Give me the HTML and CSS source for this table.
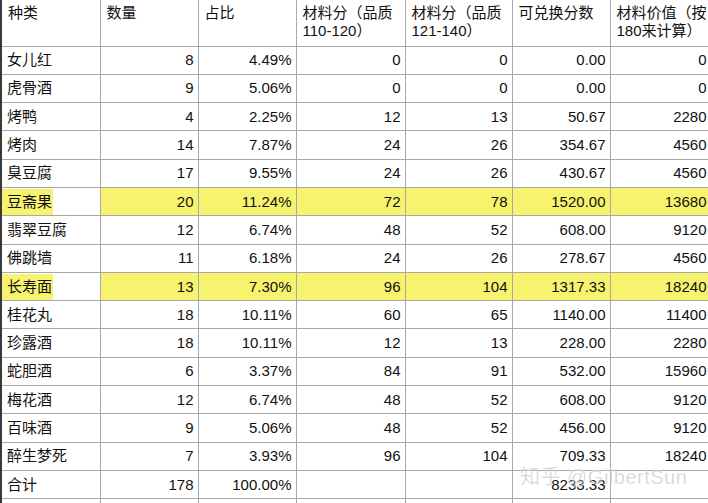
FILE: index.html
```html
<!DOCTYPE html>
<html lang="zh">
<head>
<meta charset="utf-8">
<link rel="stylesheet" href="styles.css">
</head>
<body>
<div class="sheet">
<table class="grid">
<colgroup>
<col class="c1"><col class="c2"><col class="c3"><col class="c4"><col class="c5"><col class="c6"><col class="c7">
</colgroup>
<thead>
<tr class="head">
<th>种类</th><th>数量</th><th>占比</th><th>材料分（品质<br>110-120）</th><th>材料分（品质<br>121-140）</th><th>可兑换分数</th><th>材料价值（按<br>180来计算）</th>
</tr>
</thead>
<tbody>
<tr><td>女儿红</td><td>8</td><td>4.49%</td><td>0</td><td>0</td><td>0.00</td><td>0</td></tr>
<tr><td>虎骨酒</td><td>9</td><td>5.06%</td><td>0</td><td>0</td><td>0.00</td><td>0</td></tr>
<tr><td>烤鸭</td><td>4</td><td>2.25%</td><td>12</td><td>13</td><td>50.67</td><td>2280</td></tr>
<tr><td>烤肉</td><td>14</td><td>7.87%</td><td>24</td><td>26</td><td>354.67</td><td>4560</td></tr>
<tr><td>臭豆腐</td><td>17</td><td>9.55%</td><td>24</td><td>26</td><td>430.67</td><td>4560</td></tr>
<tr class="mark"><td><span class="hl">豆斋果</span></td><td>20</td><td>11.24%</td><td>72</td><td>78</td><td>1520.00</td><td>13680</td></tr>
<tr><td>翡翠豆腐</td><td>12</td><td>6.74%</td><td>48</td><td>52</td><td>608.00</td><td>9120</td></tr>
<tr><td>佛跳墙</td><td>11</td><td>6.18%</td><td>24</td><td>26</td><td>278.67</td><td>4560</td></tr>
<tr class="mark"><td><span class="hl">长寿面</span></td><td>13</td><td>7.30%</td><td>96</td><td>104</td><td>1317.33</td><td>18240</td></tr>
<tr><td>桂花丸</td><td>18</td><td>10.11%</td><td>60</td><td>65</td><td>1140.00</td><td>11400</td></tr>
<tr><td>珍露酒</td><td>18</td><td>10.11%</td><td>12</td><td>13</td><td>228.00</td><td>2280</td></tr>
<tr><td>蛇胆酒</td><td>6</td><td>3.37%</td><td>84</td><td>91</td><td>532.00</td><td>15960</td></tr>
<tr><td>梅花酒</td><td>12</td><td>6.74%</td><td>48</td><td>52</td><td>608.00</td><td>9120</td></tr>
<tr><td>百味酒</td><td>9</td><td>5.06%</td><td>48</td><td>52</td><td>456.00</td><td>9120</td></tr>
<tr><td>醉生梦死</td><td>7</td><td>3.93%</td><td>96</td><td>104</td><td>709.33</td><td>18240</td></tr>
<tr><td>合计</td><td>178</td><td>100.00%</td><td></td><td></td><td>8233.33</td><td></td></tr>
<tr class="tail"><td></td><td></td><td></td><td></td><td></td><td></td><td></td></tr>
</tbody>
</table>
<div class="watermark">知乎 @GilbertSun</div>
</div>
</body>
</html>
```

FILE: styles.css
```css
html, body {
  margin: 0;
  padding: 0;
  background: #ffffff;
}
.sheet {
  position: relative;
  width: 708px;
  height: 503px;
  overflow: hidden;
}
.grid {
  border-collapse: collapse;
  table-layout: fixed;
  width: 710px;
  font-family: "Liberation Sans", "Noto Sans CJK SC", sans-serif;
  font-size: 15px;
  color: #111111;
}
.c1 { width: 99px; }
.c2 { width: 98px; }
.c3 { width: 98px; }
.c4 { width: 109px; }
.c5 { width: 107px; }
.c6 { width: 98px; }
.c7 { width: 101px; }
.grid th, .grid td {
  border: 1px solid #a9a9a9;
  padding: 0 4px 0 6px;
  overflow: hidden;
  white-space: nowrap;
}
.grid th:first-child, .grid td:first-child {
  border-left: 2px solid #3a3a3a;
}
.grid th {
  border-top: none;
  height: 46px;
  font-weight: normal;
  text-align: left;
  vertical-align: top;
  line-height: 18px;
  padding-top: 4px;
  box-sizing: border-box;
}
.grid td {
  height: 28.3px;
  text-align: right;
  vertical-align: middle;
  line-height: 18px;
  box-sizing: border-box;
}
.grid td:first-child {
  text-align: left;
  padding-left: 5px;
}
.mark td {
  background: #f8f36e;
}
.mark td:first-child {
  background: #ffffff;
}
.hl {
  background: #f8f36e;
  padding: 4px 1px 5px 5px;
  margin-left: -5px;
}
.tail td {
  height: 10px;
}
.watermark {
  position: absolute;
  left: 520px;
  top: 461px;
  font-family: "Liberation Sans", "Noto Sans CJK SC", sans-serif;
  font-size: 20px;
  letter-spacing: 0.5px;
  color: rgba(165, 165, 165, 0.5);
  -webkit-text-stroke: 0.5px rgba(255, 255, 255, 0.6);
  white-space: nowrap;
}
```
